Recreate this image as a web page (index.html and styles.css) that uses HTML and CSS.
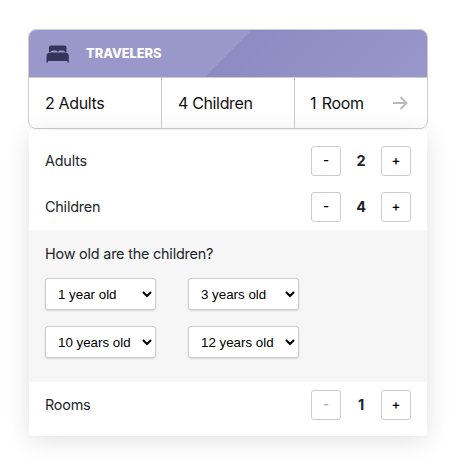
FILE: index.html
```html
<!DOCTYPE html>
<html lang="en">
<head>
<meta charset="utf-8">
<title>Travelers</title>
<link rel="stylesheet" href="styles.css">
</head>
<body>
<main class="travelers">
  <section class="card">
    <header class="card-header">
      <svg class="bed" width="24" height="18" viewBox="0 0 24 18" aria-hidden="true">
        <path d="M3 7V2.500Q3 .5 5 .5H18.500Q20.500 .5 20.500 2.500V7H19Q18.800 5.500 17 5.500H14Q12.800 5.500 12.600 6.500H11Q10.800 5.500 9.600 5.500H6.500Q4.800 5.500 4.600 7Z"/>
        <path d="M3.500 7.500H20Q22.800 8 22.800 11V17.500H21.300V16H2V17.500H.5V11Q.5 8 3.500 7.500Z"/>
      </svg>
      <h1 class="title">TRAVELERS</h1>
    </header>
    <div class="summary">
      <div class="cell"><span class="label">2 Adults</span></div>
      <div class="cell"><span class="label">4 Children</span></div>
      <div class="cell"><span class="label room">1 Room</span>
        <svg class="arrow" width="16" height="14" viewBox="0 0 16 14" aria-hidden="true"><path d="M0 7H13.500M7.500 1L13.500 7L7.500 13"/></svg>
      </div>
    </div>
  </section>
  <section class="panel">
    <div class="row"><span class="name">Adults</span><div class="stepper"><button>-</button><b>2</b><button>+</button></div></div>
    <div class="row"><span class="name">Children</span><div class="stepper"><button>-</button><b>4</b><button>+</button></div></div>
    <div class="ages">
      <p class="question">How old are the children?</p>
      <div class="age-grid">
        <select><option>1 year old</option></select>
        <select><option>3 years old</option></select>
        <select><option>10 years old</option></select>
        <select><option>12 years old</option></select>
      </div>
    </div>
    <div class="row"><span class="name">Rooms</span><div class="stepper"><button disabled>-</button><b>1</b><button>+</button></div></div>
  </section>
</main>
</body>
</html>
```
FILE: styles.css
```css
* { box-sizing: border-box; }
body {
  min-height: 470px;
  margin: 0;
  padding: 29px 0 0 28px;
  background: #fff;
  color: #212529;
  font-family: Inter, "Liberation Sans", sans-serif;
}
.travelers { width: 400px; }
.card {
  height: 100px;
  border: 1px solid #ccc;
  border-radius: 8px;
  overflow: hidden;
}
.card-header {
  display: flex;
  align-items: center;
  height: 48px;
  padding-left: 17px;
  border-bottom: 1px solid #ccc;
  background: linear-gradient(135deg, #9a98ca 50%, #8d8bc1 50.2%, #9896ca 100%);
}
.bed { fill: #35345a; }
.title {
  margin: 0 0 0 16px;
  color: #fff;
  font-size: 12.8px;
  line-height: 16px;
  font-weight: 800;
}
.summary { display: grid; grid-template-columns: 133px 133px 1fr; height: 50px; }
.cell {
  display: flex;
  align-items: center;
  justify-content: space-between;
  padding: 0 18px 0 16px;
  border-right: 1px solid #ccc;
  color: #111;
  font-size: 16px;
}
.cell:last-child { border-right: 0; }
.label { letter-spacing: -0.35px; white-space: nowrap; }
.room { margin-left: -1px; word-spacing: 1.5px; }
.arrow { fill: none; stroke: #bbb; stroke-width: 2; }
.panel {
  width: 398px;
  height: 306px;
  margin: 1px 0 0 1px;
  padding-top: 8px;
  border-radius: 4px;
  background: #fff;
  box-shadow: 0 4px 24px rgba(0, 0, 0, .12);
}
.row {
  display: flex;
  align-items: center;
  justify-content: space-between;
  height: 46px;
  padding: 0 16px;
  font-size: 14.4px;
}
.name { padding-bottom: 2px; letter-spacing: -0.2px; }
.stepper { display: flex; align-items: center; }
.stepper b { width: 40px; padding-bottom: 2px; text-align: center; font-weight: 700; }
.stepper button {
  width: 30px;
  height: 30px;
  padding: 0 0 2px;
  border: 1px solid #ccc;
  border-radius: 3px;
  background: #fff;
  color: #000;
  font: 500 13.333px Inter, sans-serif;
}
.stepper button:disabled { color: #aaa; }
.ages { height: 152px; padding: 14px 16px 0; background: #f6f6f6; }
.question {
  height: 20px;
  margin: 0 0 14px;
  font-size: 14.4px;
  line-height: 20px;
  letter-spacing: -0.2px;
}
.age-grid { display: grid; grid-template-columns: 111px 111px; gap: 16px 32px; }
.age-grid select {
  width: 111px;
  height: 32px;
  padding: 0 0 0 8px;
  border: 1px solid #ccc;
  border-radius: 3px;
  background: #fff;
  color: #000;
  font: 13.333px "Liberation Sans", Arial, sans-serif;
  box-shadow: 0 1px 2px rgba(0, 0, 0, .12);
}
```
